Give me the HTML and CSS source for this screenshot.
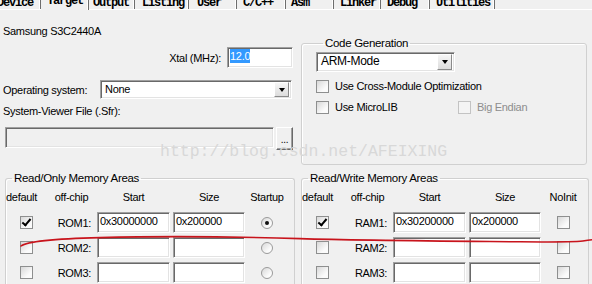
FILE: index.html
```html
<!DOCTYPE html>
<html lang="en">
<head>
  <meta charset="UTF-8" />
  <title>Options for Target - Target</title>
  <link rel="stylesheet" href="styles.css">
</head>
<body>

<div class="tabs">
  <div class="tab t-device">Device</div>
  <div class="tab t-target active">Target</div>
  <div class="tab t-output">Output</div>
  <div class="tab t-listing">Listing</div>
  <div class="tab t-user">User</div>
  <div class="tab t-cpp">C/C++</div>
  <div class="tab t-asm">Asm</div>
  <div class="tab t-linker">Linker</div>
  <div class="tab t-debug">Debug</div>
  <div class="tab t-utils">Utilities</div>
</div>

<div class="panel">
  <div class="top">
    <div class="device">
      <div class="device-name">Samsung S3C2440A</div>
      <div class="xtal-row">
        <span>Xtal (MHz):</span>
        <div class="edit xtal"><span class="selected">12.0</span></div>
      </div>
      <div class="os-row">
        <span class="os-label">Operating system:</span>
        <div class="combo os"><span>None</span><span class="drop"></span></div>
      </div>
      <div class="sfr-label">System-Viewer File (.Sfr):</div>
      <div class="sfr-row">
        <div class="edit sfr"></div>
        <div class="button browse">...</div>
      </div>
    </div>

    <fieldset class="group codegen">
      <legend>Code Generation</legend>
      <div class="combo arm"><span>ARM-Mode</span><span class="drop"></span></div>
      <label class="check"><span class="box"></span>Use Cross-Module Optimization</label>
      <div class="check-row">
        <label class="check microlib"><span class="box"></span>Use MicroLIB</label>
        <label class="check disabled"><span class="box"></span>Big Endian</label>
      </div>
    </fieldset>
  </div>

  <div class="memory">
    <fieldset class="group mem">
      <legend>Read/Only Memory Areas</legend>
      <div class="mem-grid">
        <div class="head first">default</div>
        <div class="head">off-chip</div>
        <div class="head">Start</div>
        <div class="head">Size</div>
        <div class="head">Startup</div>

        <span class="box checked"></span>
        <div class="name">ROM1:</div>
        <div class="edit">0x30000000</div>
        <div class="edit">0x200000</div>
        <span class="radio on"></span>

        <span class="box"></span>
        <div class="name">ROM2:</div>
        <div class="edit"></div>
        <div class="edit"></div>
        <span class="radio"></span>

        <span class="box"></span>
        <div class="name">ROM3:</div>
        <div class="edit"></div>
        <div class="edit"></div>
        <span class="radio"></span>
      </div>
    </fieldset>

    <fieldset class="group mem">
      <legend>Read/Write Memory Areas</legend>
      <div class="mem-grid">
        <div class="head first">default</div>
        <div class="head">off-chip</div>
        <div class="head">Start</div>
        <div class="head">Size</div>
        <div class="head">NoInit</div>

        <span class="box checked"></span>
        <div class="name">RAM1:</div>
        <div class="edit">0x30200000</div>
        <div class="edit">0x200000</div>
        <span class="box"></span>

        <span class="box"></span>
        <div class="name">RAM2:</div>
        <div class="edit"></div>
        <div class="edit"></div>
        <span class="box"></span>

        <span class="box"></span>
        <div class="name">RAM3:</div>
        <div class="edit"></div>
        <div class="edit"></div>
        <span class="box"></span>
      </div>
    </fieldset>
  </div>
</div>

<!-- watermark and the red pen stroke lie over the dialog -->
<div class="watermark">http://blog.csdn.net/AFEIXING</div>
<svg class="pen" width="592" height="284" viewBox="0 0 592 284">
  <path d="M21 246 C 26 242, 45 239, 100 237.6 S 240 236.8, 300 238.6 S 440 241, 520 241.8 S 575 241, 592 239.8"
        fill="none" stroke="#c8141c" stroke-width="1.6" stroke-linecap="round"/>
</svg>

</body>
</html>
```

FILE: styles.css
```css
* {
  box-sizing: border-box;
}
body {
  margin: 0;
  width: 592px;
  height: 284px;
  overflow: hidden;
  position: relative;
  background: #f0f0f0;
  font-family: 'Liberation Sans', Arial, sans-serif;
  font-size: 11px;
  letter-spacing: -0.3px;
  color: #000;
}

/* tab strip, cut off at the top of the shot */
.tabs {
  display: flex;
  height: 10px;
  margin-left: -9px;
  border-bottom: 1px solid #fff;
}
.tab {
  height: 9px;
  padding-left: 6px;
  font: bold 12px 'Liberation Mono', monospace;
  letter-spacing: -1.2px;
  line-height: 6px;
  color: #000;
  white-space: nowrap;
  border-right: 1px solid #6d6d6d;
  box-shadow: inset -1px 0 #fff;
}
.tab.active {
  line-height: 2px;
  height: 10px;
  background: #f0f0f0;
}
.t-device { width: 50px; }
.t-target { width: 48px; }
.t-output { width: 46px; padding-left: 4px; }
.t-listing { width: 54px; padding-left: 7px; }
.t-user { width: 48px; padding-left: 8px; }
.t-cpp { width: 49px; }
.t-asm { width: 48px; padding-left: 5px; }
.t-linker { width: 47px; }
.t-debug { width: 49px; }
.t-utils { width: 65px; }

.top {
  display: grid;
  grid-template-columns: 290px 286px;
  column-gap: 8px;
  padding-left: 3px;
  align-items: start;
}
.device-name {
  margin-top: 14px;
  line-height: 14px;
}
.xtal-row {
  display: flex;
  justify-content: flex-end;
  align-items: center;
  gap: 6px;
  margin-top: 9px;
}
.os-row {
  display: flex;
  align-items: center;
  margin-top: 12px;
}
.os-label {
  width: 97px;
}
.sfr-label {
  margin-top: 5px;
  line-height: 14px;
}
.sfr-row {
  display: flex;
  align-items: flex-start;
  gap: 2px;
  margin-top: 9px;
  padding-left: 2px;
}

/* sunken edit boxes */
.edit {
  height: 21px;
  padding: 1px 2px;
  line-height: 14px;
  background: #fff;
  border: 1px solid;
  border-color: #a0a0a0 #fff #fff #a0a0a0;
  box-shadow: inset 1px 1px 0 #696969, inset -1px -1px 0 #e3e3e3;
  white-space: nowrap;
  overflow: hidden;
}
.xtal {
  width: 66px;
}
.selected {
  background: #3399ff;
  color: #fff;
  padding: 1px 0;
}
.sfr {
  width: 270px;
  background: #f0f0f0;
}
.button {
  width: 17px;
  height: 23px;
  border: 1px solid;
  border-color: #fff #696969 #696969 #fff;
  box-shadow: inset -1px -1px 0 #a0a0a0;
  background: #f0f0f0;
  text-align: center;
  line-height: 24px;
  font-size: 10px;
}

.combo {
  display: flex;
  align-items: stretch;
  height: 19px;
  padding: 2px 2px 2px 4px;
  background: #fff;
  border: 1px solid;
  border-color: #a0a0a0 #fff #fff #a0a0a0;
  box-shadow: inset 1px 1px 0 #696969, inset -1px -1px 0 #e3e3e3;
}
.combo span:first-child {
  flex: 1;
  line-height: 13px;
}
.drop {
  width: 15px;
  margin: -1px 0 -1px;
  display: flex;
  align-items: center;
  justify-content: center;
  background: linear-gradient(#f6f6f6, #dcdcdc);
  border: 1px solid;
  border-color: #fff #8a8a8a #8a8a8a #fff;
}
.drop::after {
  content: '';
  border-top: 4px solid #000;
  border-left: 3.5px solid transparent;
  border-right: 3.5px solid transparent;
}
.os {
  width: 192px;
}
.arm {
  width: 139px;
  height: 20px;
}
.arm span:first-child {
  font-size: 12px;
}

/* group boxes */
.group {
  margin: 0;
  padding: 0;
  min-width: 0;
  border: 1px solid #d0d0d0;
  border-radius: 3px;
  box-shadow: inset 1px 1px 0 #fff;
}
.group legend {
  margin-left: 6px;
  padding: 0 2px;
  line-height: 14px;
  font-size: 11.5px;
}
.codegen {
  margin-top: 26px;
  height: 129px;
  padding: 2px 0 0 14px;
}
.codegen legend {
  margin-left: 7px;
}

.check {
  display: flex;
  align-items: center;
  gap: 6px;
  height: 14px;
  margin-top: 7px;
}
.check-row {
  display: flex;
}
.microlib {
  width: 142px;
}
.check.disabled {
  color: #8d8d8d;
}

.box {
  display: inline-block;
  position: relative;
  width: 13px;
  height: 13px;
  border: 1px solid #8e8f8f;
  background: linear-gradient(135deg, #d8d8d8, #fbfbfb 70%);
}
.disabled .box {
  border-color: #c3c3c3;
  background: #f4f4f4;
}
.box.checked::after {
  content: '';
  position: absolute;
  left: 3px;
  top: 0px;
  width: 3px;
  height: 7px;
  border-right: 2px solid #000;
  border-bottom: 2px solid #000;
  transform: rotate(40deg);
}
.radio {
  display: inline-flex;
  align-items: center;
  justify-content: center;
  width: 12px;
  height: 12px;
  border-radius: 50%;
  border: 1px solid #9a9a9a;
  background: linear-gradient(135deg, #d8d8d8, #fbfbfb 70%);
}
.radio.on::after {
  content: '';
  width: 4px;
  height: 4px;
  border-radius: 50%;
  background: #111;
}

.memory {
  display: grid;
  grid-template-columns: 290px 288px;
  column-gap: 6px;
  margin-top: 6px;
  padding-left: 5px;
}
.mem {
  height: 113px;
  padding: 5px 0 0 0;
  border-bottom: 0;
  border-radius: 3px 3px 0 0;
}
.mem-grid {
  display: grid;
  grid-template-columns: 40px 45px 73px 72px 38px;
  grid-template-rows: 18px repeat(3, 21px);
  column-gap: 3px;
  row-gap: 4px;
  justify-items: center;
  align-items: center;
}
.head {
  align-self: start;
  line-height: 14px;
}
.head.first {
  justify-self: start;
}
.mem-grid .name {
  justify-self: end;
  padding-right: 3px;
}
.mem-grid .edit {
  width: 100%;
}

.watermark {
  position: absolute;
  left: 160px;
  top: 142px;
  font: 16.5px 'Liberation Mono', monospace;
  letter-spacing: 0;
  color: #d8d8d8;
  pointer-events: none;
}
.pen {
  position: absolute;
  left: 0;
  top: 0;
  pointer-events: none;
}
```
